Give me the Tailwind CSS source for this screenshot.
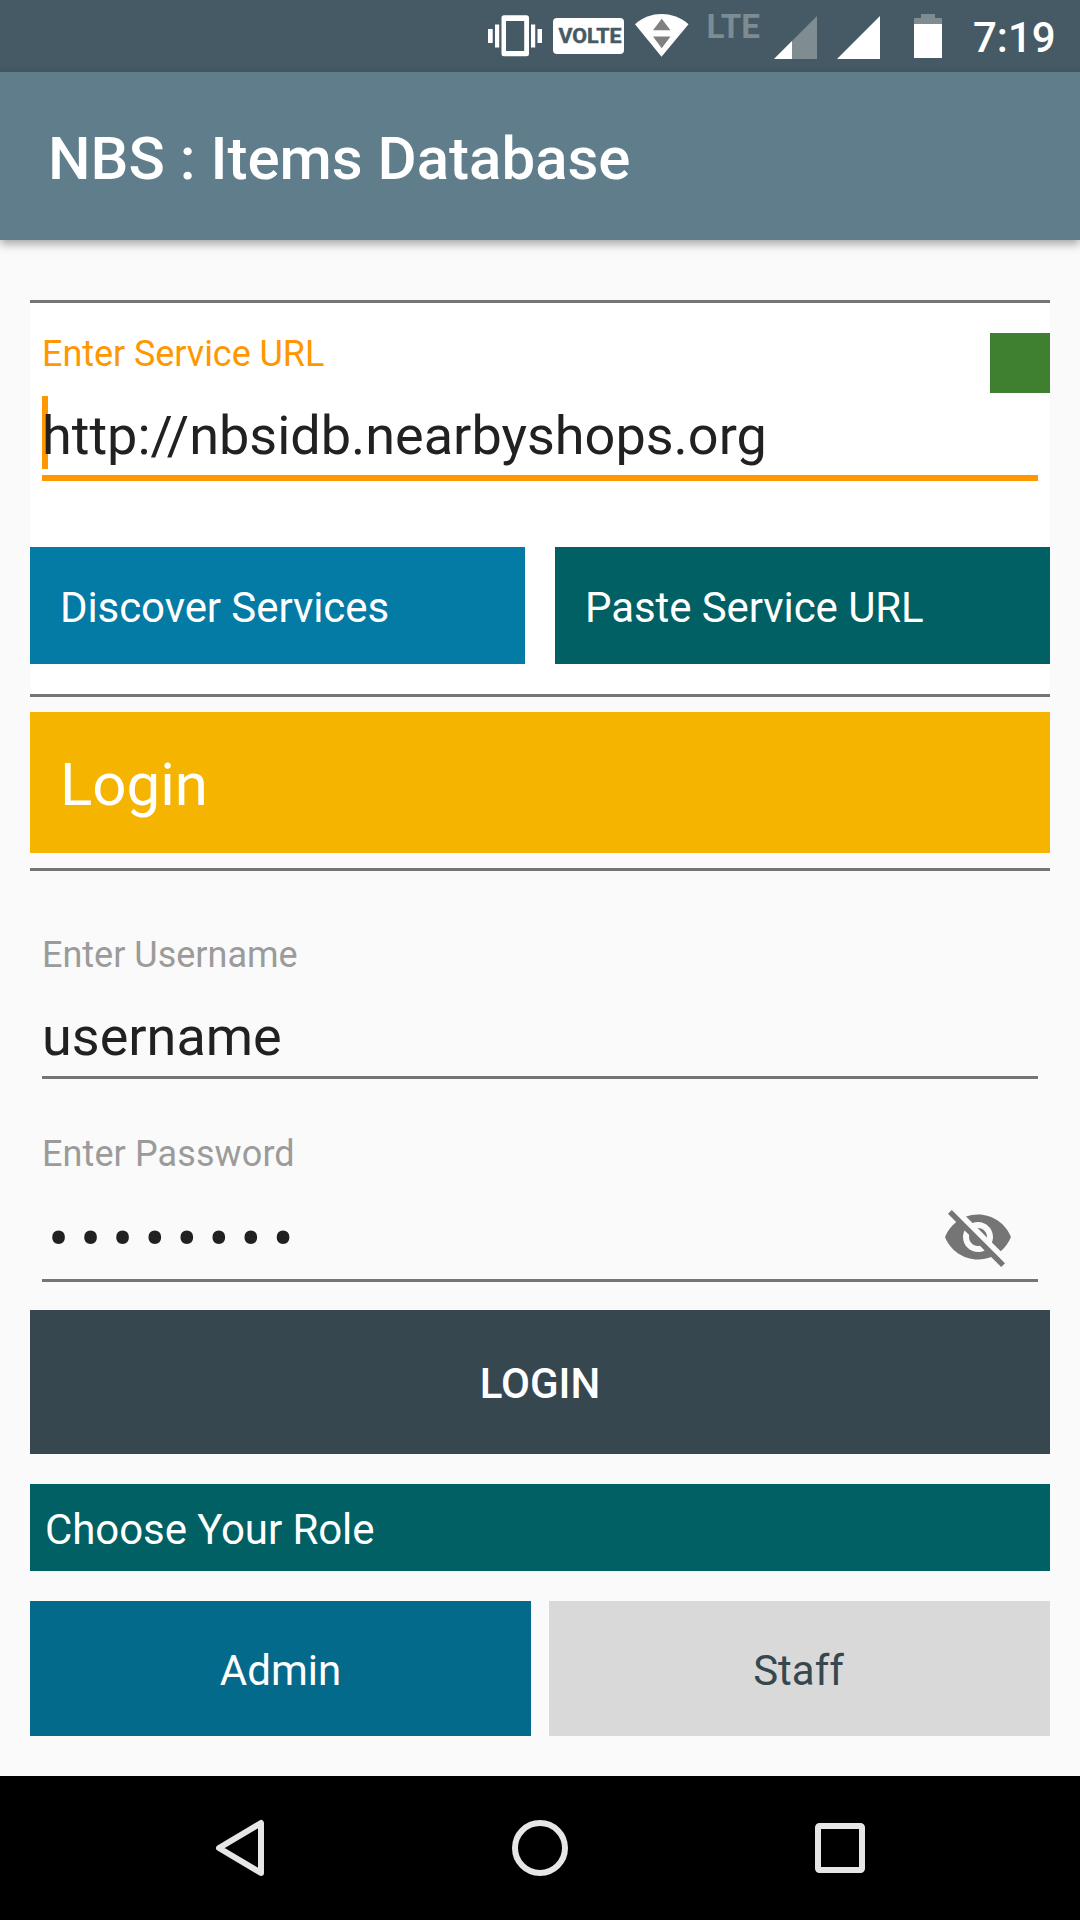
<!DOCTYPE html>
<html lang="en">
<head>
<meta charset="utf-8">
<title>NBS : Items Database</title>
<script src="https://cdn.jsdelivr.net/npm/@tailwindcss/browser@4"></script>
</head>
<body class="w-[1080px] h-[1920px] flex flex-col overflow-hidden bg-[#fafafa] font-[Roboto,sans-serif] text-[42px] text-white">

  <!-- Status bar -->
  <div class="h-[72px] shrink-0 bg-[#455a64] flex items-center pl-[488px]">
    <svg class="w-[54px] h-[72px] shrink-0" viewBox="488 0 54 72" fill="#fff">
      <path fill-rule="evenodd" d="M504 15.3h22.5q2.5 0 2.5 2.5v36q0 2.5-2.5 2.5H504q-2.5 0-2.5-2.5v-36q0-2.5 2.5-2.5zM506 21v30h18.200V21z"/>
      <path d="M488 29h4.700v14H488zM495 24.500h4.200v23H495zM531 24.500h4.200v23H531zM537.500 29h4.500v14h-4.500z"/>
    </svg>
    <svg class="w-[71px] h-[72px] shrink-0 ml-[11px]" viewBox="553 0 71 72">
      <rect x="553" y="18" width="71" height="36" rx="4" fill="#fff"/>
      <text x="558.500" y="43.400" font-size="21" font-weight="700" textLength="63" lengthAdjust="spacingAndGlyphs" fill="#455a64" stroke="#455a64" stroke-width="0.500">VOLTE</text>
    </svg>
    <svg class="w-[54px] h-[72px] shrink-0 ml-[11px]" viewBox="635 0 54 72">
      <path d="M661.500 56.700L635 24.200C642.500 17.300 652 14 661.500 14s19.500 3.300 27 10.200z" fill="#fff"/>
      <path d="M653 30.300h17.500L661.700 18.700zM653 36.500h17.500L661.700 48.200z" fill="#808080"/>
    </svg>
    <svg class="w-[53px] h-[72px] shrink-0 ml-[18px]" viewBox="707 0 53 72">
      <text x="706.500" y="38" font-size="32.500" font-weight="700" textLength="53.500" lengthAdjust="spacingAndGlyphs" fill="#7d8b92">LTE</text>
    </svg>
    <svg class="w-[43px] h-[72px] shrink-0 ml-[14px]" viewBox="774 0 43 72">
      <path d="M774 59h43V16z" fill="#7f8d93"/>
      <path d="M774 59h18V41z" fill="#fff"/>
    </svg>
    <svg class="w-[43px] h-[72px] shrink-0 ml-5" viewBox="837 0 43 72">
      <path d="M837 59h43V16z" fill="#fff"/>
    </svg>
    <svg class="w-[28px] h-[72px] shrink-0 ml-[34px]" viewBox="914 0 28 72">
      <path d="M914 18h7v-4h14v4h7v7h-28z" fill="#7f8d93"/>
      <path d="M914 24h28v34h-28z" fill="#fff"/>
    </svg>
    <span class="ml-[31px] pt-[3px] font-medium">7:19</span>
  </div>

  <!-- App bar -->
  <header class="relative z-10 h-[168px] shrink-0 bg-[#607d8b] px-12 pt-[5px] flex items-center shadow-[0_4px_9px_rgba(0,0,0,0.34)]">
    <h1 class="text-[60px] font-medium">NBS : Items Database</h1>
  </header>

  <main class="mt-[60px] px-[30px] flex flex-col">
    <!-- Service URL -->
    <section class="h-[397px] bg-white border-y-[3px] border-[#757575] pt-[30px]">
      <div class="flex justify-between pl-3">
        <label class="text-[36px] leading-[42px] tracking-[-0.06px] text-[#ff9800]">Enter Service URL</label>
        <span class="size-[60px] bg-[#3e8030]"></span>
      </div>
      <div class="relative mx-3 mt-[3px] h-[85px] border-b-[6px] border-[#ff9800]">
        <span class="absolute left-0 top-0 w-[6px] h-[73px] bg-[#ff9800]"></span>
        <span class="relative block text-[54px] leading-[79px] text-[#212121]">http://nbsidb.nearbyshops.org</span>
      </div>
      <div class="mt-[66px] grid grid-cols-2 gap-[30px]">
        <button class="h-[117px] bg-[#047ba5] px-[30px] pt-[4px] text-left tracking-[-0.08px]">Discover Services</button>
        <button class="h-[117px] bg-[#006064] px-[30px] pt-[4px] text-left tracking-[-0.08px]">Paste Service URL</button>
      </div>
    </section>

    <!-- Login heading -->
    <h2 class="mt-[15px] h-[141px] bg-[#f5b400] px-[30px] pt-[5px] flex items-center text-[60px]">Login</h2>
    <hr class="mt-[15px] border-t-[3px] border-[#757575]">

    <!-- Credentials -->
    <div class="mx-3 mt-[62px] h-[146px] border-b-[3px] border-[#757575]">
      <label class="block text-[36px] leading-[44px] text-[#9b9b9b]">Enter Username</label>
      <span class="block mt-[20px] text-[54px] leading-[79px] text-[#212121]">username</span>
    </div>
    <div class="mx-3 mt-[53px] h-[150px] border-b-[3px] border-[#757575]">
      <label class="block text-[36px] leading-[44px] tracking-[0.1px] text-[#9b9b9b]">Enter Password</label>
      <div class="mt-[20px] flex items-center justify-between pl-[6px] pr-6">
        <span class="text-[63px] leading-[88px] tracking-[10.8px] text-[#212121]">••••••••</span>
        <svg class="size-[72px] -mt-[6px]" viewBox="0 0 24 24" fill="#757575">
          <path d="M12 7c2.760 0 5 2.240 5 5 0 .65-.13 1.260-.36 1.830l2.920 2.920c1.510-1.260 2.700-2.890 3.430-4.750-1.730-4.390-6-7.500-11-7.500-1.400 0-2.740.25-3.980.7l2.160 2.160C10.740 7.130 11.350 7 12 7zM2 4.270l2.280 2.280.46.46C3.080 8.300 1.780 10.020 1 12c1.730 4.390 6 7.500 11 7.500 1.550 0 3.030-.3 4.380-.84l.42.42L19.730 22 21 20.730 3.270 3 2 4.270zM7.530 9.800l1.550 1.550c-.05.21-.08.43-.08.65 0 1.660 1.340 3 3 3 .22 0 .44-.03.65-.08l1.550 1.550c-.67.33-1.410.53-2.200.53-2.760 0-5-2.240-5-5 0-.79.2-1.530.53-2.200zm4.310-.78l3.150 3.150.02-.16c0-1.660-1.340-3-3-3l-.17.01z"/>
        </svg>
      </div>
    </div>
    <button class="mt-[28px] h-[144px] bg-[#37474f] pt-[3px] font-medium">LOGIN</button>

    <!-- Role -->
    <div class="mt-[30px] h-[87px] bg-[#006064] px-[15px] pt-[4px] flex items-center tracking-[-0.08px]">Choose Your Role</div>
    <div class="mt-[30px] grid grid-cols-2 gap-[18px]">
      <button class="h-[135px] bg-[#046a8b] pt-[4px]">Admin</button>
      <button class="h-[135px] bg-[#d9d9d9] pt-[4px] pr-[2px] text-[#37474f]">Staff</button>
    </div>
  </main>

  <!-- Navigation bar -->
  <nav class="mt-auto h-[144px] shrink-0 bg-black flex items-center justify-between pl-[215px] pr-[215px]">
    <svg class="w-[50px] h-[58px]" viewBox="0 0 50 58" fill="none" stroke="#e6e6e6" stroke-width="6" stroke-linejoin="round"><path d="M46 4v50L4 29z"/></svg>
    <svg class="size-[56px]" viewBox="0 0 56 56" fill="none" stroke="#e6e6e6" stroke-width="6"><circle cx="28" cy="28" r="25"/></svg>
    <svg class="size-[50px]" viewBox="0 0 50 50" fill="none" stroke="#e6e6e6" stroke-width="6"><rect x="3" y="3" width="44" height="44" rx="1.500"/></svg>
  </nav>
</body>
</html>
